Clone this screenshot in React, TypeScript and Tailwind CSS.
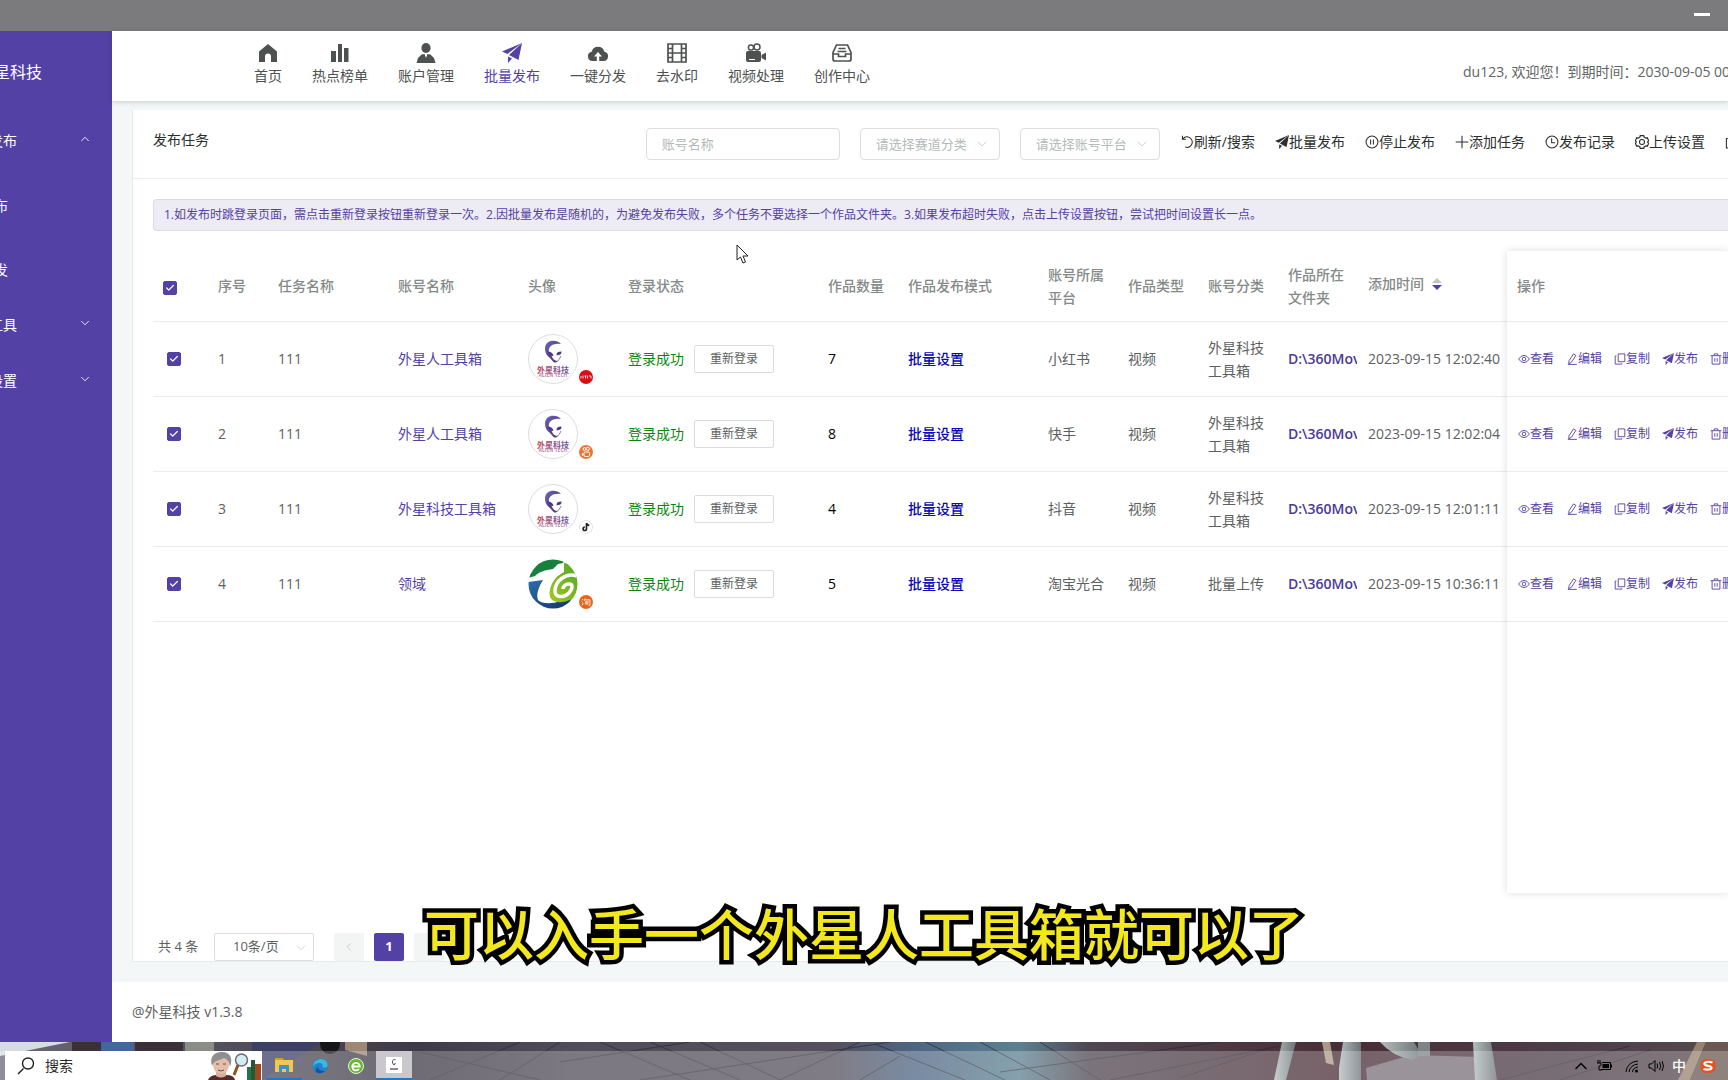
import { useState } from 'react';
import type { ReactNode } from 'react';
import { Check, ChevronDown, ChevronLeft, ChevronUp } from 'lucide-react';

// ---------- icons (20 x 20 grid) ----------

function Glyph({ className, children }: { className?: string; children: ReactNode }) {
    return (
        <svg viewBox="0 0 20 20" className={className} fill="currentColor" aria-hidden="true">
            {children}
        </svg>
    );
}

const line = { fill: 'none', stroke: 'currentColor', strokeWidth: 1.5 };

const icons: Record<string, ReactNode> = {
    home: <path d="M10 1 19 8.500V19h-6v-5.500a3 3 0 0 0-6 0V19H1V8.500z" />,
    stats: <path d="M1 8h5v11H1zM8 1h4v18H8zM14 5h4.500v14H14z" />,
    person: (
        <>
            <ellipse cx="10" cy="5" rx="4.600" ry="5" />
            <path d="M5.500 11.500 8.500 11l1.500 4 1.500-4 3 .5L18 15l1.500 5H.500L2 15z" />
        </>
    ),
    plane: (
        <>
            <path d="M20 0 0 8.500 5.500 11z" />
            <path d="M20 0 7 12l9.500 5z" />
            <path d="M6 13.500V20l4-4.500z" />
        </>
    ),
    cloud: (
        <>
            <path d="M4.800 18A4.700 4.700 0 0 1 3.700 8.700 6.500 6.500 0 0 1 16.300 8.700 4.700 4.700 0 0 1 15.200 18z" />
            <path d="M10 9 6 13.500h2.800V18h2.400v-4.500H14z" fill="#fff" />
        </>
    ),
    film: <path {...line} strokeWidth={1.7} d="M1 1h18v18H1zM5.500 1v18M14.500 1v18M5.500 10h9M1 5.500h4.500M1 10h4.500M1 14.500h4.500M14.500 5.500H19M14.500 10H19M14.500 14.500H19" />,
    camera: (
        <>
            <circle cx="5" cy="4.500" r="2.600" {...line} />
            <circle cx="11" cy="4" r="3" {...line} />
            <rect x="0" y="8" width="15" height="11" rx="2" />
            <path d="M15.500 12 20 9.500v8L15.500 15z" />
            <path d="M3 16.500h6" stroke="#fff" strokeWidth="1" />
        </>
    ),
    inbox: <path {...line} strokeWidth={1.7} d="M4.500 2h11L19 9.500V16a2 2 0 0 1-2 2H3a2 2 0 0 1-2-2V9.500zM1 11h5.500v2.500h7V11H19M6.500 5.500h7M5.500 8.500h9" />,
    refresh: <path {...line} d="M4 5.500A7.500 7.500 0 1 1 7.500 17.300M3.500 1v5h5" />,
    pause: (
        <>
            <circle cx="10" cy="10" r="8.500" {...line} />
            <path {...line} d="M8 6.500v7M12 6.500v7" />
        </>
    ),
    plus: <path {...line} d="M10 1v18M1 10h18" />,
    clock: (
        <>
            <circle cx="10" cy="10" r="8.500" {...line} />
            <path {...line} d="M9.500 4.500V11h5" />
        </>
    ),
    gear: (
        <>
            <path {...line} strokeWidth={1.7} d="m7 3 .5-2h5l.5 2 2.500 1.500 2-.5 2 4-1.500 2 1.500 2-2 4-2-.5L13 17l-.5 2h-5L7 17l-2.500-1.500-2 .5-2-4L2 10 .5 8l2-4 2 .5z" />
            <circle cx="10" cy="10" r="3.600" {...line} />
        </>
    ),
    eye: (
        <>
            <path {...line} d="M1 10q4-6 9-6t9 6q-4 6-9 6t-9-6z" />
            <circle cx="10" cy="10" r="3" {...line} />
        </>
    ),
    edit: <path {...line} d="M12.500 1.500 16.500 4 9 15.500l-4.500 2.500.5-5zM3 19h15" />,
    copy: <path {...line} d="M7 1.500h11v13H7zM4 5H2v13.500h11V17" />,
    trash: <path {...line} d="M1 4.500h18M7 4V1.500h6V4M3.500 4.500v14h13v-14M8 8.500v6M12 8.500v6" />,
};

// ---------- data ----------

const navItems = [
    { icon: 'home', label: '首页' },
    { icon: 'stats', label: '热点榜单' },
    { icon: 'person', label: '账户管理' },
    { icon: 'plane', label: '批量发布' },
    { icon: 'cloud', label: '一键分发' },
    { icon: 'film', label: '去水印' },
    { icon: 'camera', label: '视频处理' },
    { icon: 'inbox', label: '创作中心' },
];

const toolbar = [
    { icon: 'refresh', label: '刷新/搜索' },
    { icon: 'plane', label: '批量发布' },
    { icon: 'pause', label: '停止发布' },
    { icon: 'plus', label: '添加任务' },
    { icon: 'clock', label: '发布记录' },
    { icon: 'gear', label: '上传设置' },
];

const rowActions = [
    { icon: 'eye', label: '查看' },
    { icon: 'edit', label: '编辑' },
    { icon: 'copy', label: '复制' },
    { icon: 'plane', label: '发布' },
    { icon: 'trash', label: '删除' },
];

const tasks = [
    { id: 1, account: '外星人工具箱', count: 7, platform: '小红书', badge: 'red', category: '外星科技工具箱', time: '2023-09-15 12:02:40' },
    { id: 2, account: '外星人工具箱', count: 8, platform: '快手', badge: 'kuaishou', category: '外星科技工具箱', time: '2023-09-15 12:02:04' },
    { id: 3, account: '外星科技工具箱', count: 4, platform: '抖音', badge: 'douyin', category: '外星科技工具箱', time: '2023-09-15 12:01:11' },
    { id: 4, account: '领域', count: 5, platform: '淘宝光合', badge: 'taobao', category: '批量上传', time: '2023-09-15 10:36:11' },
];

// ---------- small parts ----------

function Checkbox({ label, checked, onChange }: { label: string; checked: boolean; onChange: () => void }) {
    return (
        <label className="relative block w-3.5 h-3.5">
            <input
                type="checkbox"
                aria-label={label}
                checked={checked}
                onChange={onChange}
                className="block w-3.5 h-3.5 appearance-none rounded-xs border border-gray-300 checked:bg-[#5441a6] checked:border-[#5441a6]"
            />
            {checked && <Check className="absolute inset-0.5 w-2.5 h-2.5 text-white pointer-events-none" strokeWidth={3} />}
        </label>
    );
}

function FilterSelect({ placeholder }: { placeholder: string }) {
    return (
        <div className="relative w-[140px] mt-1">
            <select
                aria-label={placeholder}
                className="w-full h-8 pl-[15px] pr-7 appearance-none rounded border border-[#dcdfe2] bg-white text-[13px] text-[#b4bab9]"
            >
                <option>{placeholder}</option>
            </select>
            <ChevronDown className="absolute right-2.5 top-2 w-4 h-4 text-[#c0c4cc] pointer-events-none" strokeWidth={1.2} />
        </div>
    );
}

function AlienAvatar() {
    return (
        <svg viewBox="0 0 50 50" className="w-[50px] h-[50px]" role="img" aria-label="外星科技">
            <defs>
                <linearGradient id="alien" x1="0" y1="0" x2="1" y2="1">
                    <stop offset="0" stopColor="#6a6fb8" />
                    <stop offset="0.5" stopColor="#5b3d92" />
                    <stop offset="1" stopColor="#4c4358" />
                </linearGradient>
                <linearGradient id="brand" x1="0" x2="1">
                    <stop offset="0" stopColor="#c5485c" />
                    <stop offset="1" stopColor="#6557a6" />
                </linearGradient>
            </defs>
            <circle cx="25" cy="25" r="24.500" fill="#fff" stroke="#dcdce4" />
            <path
                d="M33 10C28 5 17 5.500 17 15c0 4 2 7 5 9l3.500 4c1.500 1 3 .5 4-1-3 0-5-2.500-6-5.500C19 19 19 8.500 33 10z"
                fill="url(#alien)"
            />
            <path d="M19.500 17.500c3.500 0 5.500 1.500 6 4.500-3.500 0-5.500-1.500-6-4.500zM33.500 17.500c-3.500 0-5 1-5 3.800 3.500 0 5-1 5-3.800z" fill="#4c3a86" />
            <path d="M33 22q-1.500 4-4.500 6" fill="none" stroke="#6a5c86" strokeWidth="0.800" />
            <text x="25" y="38.500" textAnchor="middle" fontSize="8" fontWeight="700" fill="url(#brand)">外星科技</text>
            <text x="25" y="43" textAnchor="middle" fontSize="5" fontWeight="700" fill="#b58aa8">ALIEN TECH</text>
        </svg>
    );
}

function FieldAvatar() {
    return (
        <svg viewBox="0 0 50 50" className="w-[50px] h-[50px]" role="img" aria-label="领域">
            <defs>
                <linearGradient id="leaf" x1="0" y1="1" x2="1" y2="0">
                    <stop offset="0" stopColor="#a5c81c" />
                    <stop offset="1" stopColor="#4ea62c" />
                </linearGradient>
                <linearGradient id="sea" x1="0" y1="0" x2="1" y2="1">
                    <stop offset="0" stopColor="#2c6fae" />
                    <stop offset="1" stopColor="#12305f" />
                </linearGradient>
                <clipPath id="disc"><circle cx="25" cy="25" r="24.500" /></clipPath>
            </defs>
            <g clipPath="url(#disc)">
                <rect width="50" height="50" fill="#fff" />
                <path d="M0 0h38l-3 4-5 1-5 5c-8 1-14 3-18 7L0 19z" fill="#17803c" />
                <path d="M0 23l15-2c-5 8-7 15-5 20 6 6 25 4 38-8L36 52H0z" fill="url(#sea)" />
                <path d="M36 4l14 2v30c-6 5-14 8-20 7-8 0-10-6-8-13 2-8 7-13 13-17z" fill="url(#leaf)" />
                <path d="M49 17C38 13 27 22 27 32c0 7 9 7 14 2 4-5 4-9 0-9s-6 3-6 5" fill="none" stroke="#fff" strokeWidth="3.500" />
                <path d="M36 5l-4 1-6 6c-7 0-14 2-19 7l10-1c-4 7-5 14-4 19 2 5 9 7 15 6-6-2-8-7-6-14 2-7 5-11 9-13l5-3z" fill="#fff" />
            </g>
        </svg>
    );
}

function PlatformBadge({ kind }: { kind: string }) {
    return (
        <svg viewBox="0 0 14 14" className="w-3.5 h-3.5" aria-hidden="true">
            {kind === 'red' && (
                <>
                    <circle cx="7" cy="7" r="7" fill="#dd0d14" />
                    <path d="M2 6v2.500M4 5.500v3M5.500 6h2M6.500 6v2.500M8.500 5.500v3M10 6h2v2.500" stroke="#fff" strokeWidth="0.800" fill="none" />
                </>
            )}
            {kind === 'kuaishou' && (
                <>
                    <circle cx="7" cy="7" r="7" fill="#ee7431" />
                    <circle cx="5.500" cy="4" r="1.400" fill="none" stroke="#fff" />
                    <circle cx="8.800" cy="3.800" r="1.600" fill="none" stroke="#fff" />
                    <rect x="5" y="7" width="5.500" height="4.500" rx="1.200" fill="none" stroke="#fff" />
                    <path d="M3 7.500v3.500l2-1.500z" fill="#fff" />
                </>
            )}
            {kind === 'douyin' && (
                <>
                    <circle cx="7" cy="7" r="6.500" fill="#fff" stroke="#e3dfe3" />
                    <path d="M7.500 3v5.800a1.700 1.700 0 1 1-1.700-1.700M7.500 3c.3 1.500 1.200 2.300 2.800 2.400" fill="none" stroke="#222" strokeWidth="1.700" />
                </>
            )}
            {kind === 'taobao' && (
                <>
                    <circle cx="7" cy="7" r="7" fill="#e8641b" />
                    <path d="M3 4l1 1M2.500 6.500l1 .5M3 10.500 4.200 8M6 3.500 5.200 6M5.800 4.800H11v5.500H9.500M6 7h4M8 5.500V9M6.300 7.500V9h3.200" fill="none" stroke="#fff" strokeWidth="0.800" />
                </>
            )}
        </svg>
    );
}

// ---------- page sections ----------

function Sidebar() {
    return (
        <aside className="w-28 shrink-0 bg-[#5441a6] text-sm text-white">
            <div className="flex justify-end w-[42px] h-[82px] items-center overflow-hidden whitespace-nowrap text-base">星科技</div>
            <nav>
                <SideItem label="发布" arrow="up" />
                <a href="#batch" className="flex justify-end items-center w-2 h-[74px] overflow-hidden whitespace-nowrap">布</a>
                <a href="#single" className="flex justify-end items-center w-2 h-[54px] overflow-hidden whitespace-nowrap">发</a>
                <SideItem label="工具" arrow="down" />
                <SideItem label="设置" arrow="down" />
            </nav>
        </aside>
    );
}

function SideItem({ label, arrow }: { label: string; arrow: 'up' | 'down' }) {
    const Arrow = arrow === 'up' ? ChevronUp : ChevronDown;
    return (
        <button className="flex items-center justify-between w-full h-14 pr-5">
            <span className="flex justify-end w-[17px] overflow-hidden whitespace-nowrap">{label}</span>
            <Arrow className="w-3.5 h-3.5 mb-1" strokeWidth={1.5} />
        </button>
    );
}

function Header() {
    return (
        <header className="relative flex h-[70px] shrink-0 bg-white text-sm text-[#4d5150] shadow-[0_1px_5px_rgba(0,21,41,0.2)]">
            <nav className="flex flex-1 pl-[127px]">
                {navItems.map(item => (
                    <a
                        key={item.label}
                        href="#nav"
                        className={`flex flex-col items-center gap-1 px-[15px] pt-3 leading-[18px] whitespace-nowrap ${item.label === '批量发布' ? 'text-[#5441a6]' : ''}`}
                    >
                        <Glyph className="w-5 h-5">{icons[item.icon]}</Glyph>
                        {item.label}
                    </a>
                ))}
            </nav>
            <div className="w-[265px] pt-3 flex items-center overflow-hidden whitespace-nowrap text-[#606463]">
                du123, 欢迎您！到期时间：2030-09-05 00
            </div>
        </header>
    );
}

function CardHead() {
    return (
        <div className="flex items-center h-[69px] shrink-0 pl-5 pb-2 border-b border-[#eceeee] text-sm text-[#2b2f2e] whitespace-nowrap">
            <h2 className="flex-1">发布任务</h2>
            <div className="flex items-center gap-5 pt-1">
                <input
                    type="text"
                    aria-label="账号名称"
                    placeholder="账号名称"
                    className="w-[194px] h-8 mt-1 px-[15px] rounded border border-[#dcdfe2] text-[13px] placeholder:text-[#b4bab9]"
                />
                <FilterSelect placeholder="请选择赛道分类" />
                <FilterSelect placeholder="请选择账号平台" />
                {toolbar.map(item => (
                    <button key={item.label} className="flex items-center">
                        <Glyph className="w-3.5 h-3.5">{icons[item.icon]}</Glyph>
                        {item.label}
                    </button>
                ))}
                <button aria-label="删除" className="w-[3px] h-3.5 overflow-hidden">
                    <Glyph className="w-3.5 h-3.5">{icons.copy}</Glyph>
                </button>
            </div>
        </div>
    );
}

function TaskTable() {
    const [checked, setChecked] = useState<number[]>(tasks.map(t => t.id));
    const all = checked.length === tasks.length;

    const toggle = (id: number) => {
        setChecked(checked.includes(id) ? checked.filter(c => c !== id) : [...checked, id]);
    };

    return (
        <div className="flex flex-1 mt-5 text-sm leading-[23px] text-[#5c605f]">
            <div className="flex-1 min-w-0 overflow-hidden">
                <table className="w-full table-fixed text-left">
                    <colgroup>
                        <col className="w-[55px]" />
                        <col className="w-[60px]" />
                        <col className="w-[120px]" />
                        <col className="w-[130px]" />
                        <col className="w-[100px]" />
                        <col />
                        <col className="w-20" />
                        <col className="w-[140px]" />
                        <col className="w-20" />
                        <col className="w-20" />
                        <col className="w-20" />
                        <col className="w-20" />
                        <col className="w-[149px]" />
                    </colgroup>
                    <thead>
                        <tr className="h-[70px] border-b border-[#e9ecec] text-[#858a89] [&>th]:pl-2.5 [&>th]:font-medium [&>th]:whitespace-nowrap">
                            <th className="pt-1"><Checkbox label="全选" checked={all} onChange={() => setChecked(all ? [] : tasks.map(t => t.id))} /></th>
                            <th>序号</th>
                            <th>任务名称</th>
                            <th>账号名称</th>
                            <th>头像</th>
                            <th>登录状态</th>
                            <th>作品数量</th>
                            <th>作品发布模式</th>
                            <th>账号所属<br />平台</th>
                            <th>作品类型</th>
                            <th>账号分类</th>
                            <th>作品所在<br />文件夹</th>
                            <th className="pb-1">
                                <button className="flex items-center gap-2">
                                    添加时间
                                    <svg viewBox="0 0 10 12" className="w-2.5 h-3" aria-hidden="true">
                                        <path d="M5 0l5 5H0z" fill="#c0c4cc" />
                                        <path d="M5 12 0 7h10z" fill="#5441a6" />
                                    </svg>
                                </button>
                            </th>
                        </tr>
                    </thead>
                    <tbody>
                        {tasks.map(task => (
                            <tr key={task.id} className="h-[75px] border-b border-[#e9ecec] [&>td]:pl-2.5">
                                <td>
                                    <div className="pl-1">
                                        <Checkbox label={`选择任务 ${task.id}`} checked={checked.includes(task.id)} onChange={() => toggle(task.id)} />
                                    </div>
                                </td>
                                <td>{task.id}</td>
                                <td>111</td>
                                <td className="text-[#5441a6]">{task.account}</td>
                                <td>
                                    <div className="flex items-end gap-px">
                                        {task.badge === 'taobao' ? <FieldAvatar /> : <AlienAvatar />}
                                        <PlatformBadge kind={task.badge} />
                                    </div>
                                </td>
                                <td>
                                    <div className="flex items-center gap-2.5 whitespace-nowrap">
                                        <span className="text-[#0b860b]">登录成功</span>
                                        <button className="w-20 h-7 rounded-xs border border-[#d9dddd] text-xs">重新登录</button>
                                    </div>
                                </td>
                                <td className="text-black">{task.count}</td>
                                <td><a href="#mode" className="font-medium text-[#0a0ab0]">批量设置</a></td>
                                <td>{task.platform}</td>
                                <td>视频</td>
                                <td className="pr-2">{task.category}</td>
                                <td>
                                    <div className="w-[69px] overflow-hidden whitespace-nowrap font-semibold text-[#4b3a96]">D:\360Mov</div>
                                </td>
                                <td className="whitespace-nowrap">{task.time}</td>
                            </tr>
                        ))}
                    </tbody>
                </table>
            </div>

            {/* pinned column */}
            <div className="w-[221px] shrink-0 overflow-hidden bg-white shadow-[0_0_8px_rgba(0,0,0,0.14)]">
                <table className="w-full table-fixed text-left">
                    <thead>
                        <tr className="h-[70px] border-b border-[#e9ecec] text-[#858a89]">
                            <th className="pl-2.5 font-medium">操作</th>
                        </tr>
                    </thead>
                    <tbody>
                        {tasks.map(task => (
                            <tr key={task.id} className="h-[75px] border-b border-[#e9ecec]">
                                <td className="pl-[11px]">
                                    <div className="flex gap-3 whitespace-nowrap text-xs text-[#5441a6]">
                                        {rowActions.map(action => (
                                            <button key={action.label} className="flex shrink-0 items-center">
                                                <Glyph className="w-3 h-3">{icons[action.icon]}</Glyph>
                                                {action.label}
                                            </button>
                                        ))}
                                    </div>
                                </td>
                            </tr>
                        ))}
                    </tbody>
                </table>
            </div>
        </div>
    );
}

function Pagination() {
    return (
        <div className="flex items-center h-7 mt-10 pl-[5px] text-[13px] text-[#5c605f]">
            <span className="w-14">共 4 条</span>
            <div className="relative w-[100px] mr-5">
                <select aria-label="每页条数" className="w-full h-7 pl-[18px] appearance-none rounded-xs border border-[#dcdfe2] bg-white">
                    <option>10条/页</option>
                </select>
                <ChevronDown className="absolute right-1.5 top-2 w-3.5 h-3.5 text-[#c0c4cc] pointer-events-none" strokeWidth={1.2} />
            </div>
            <div className="flex gap-2.5">
                <button disabled aria-label="上一页" className="flex items-center justify-center w-[30px] h-7 rounded-xs bg-[#f3f5f5] text-[#c0c4cc]">
                    <ChevronLeft className="w-3.5 h-3.5" strokeWidth={1.5} />
                </button>
                <button className="w-[30px] h-7 rounded-xs bg-[#5441a6] font-bold text-white">1</button>
                <button disabled aria-label="下一页" className="w-[30px] h-7 rounded-xs bg-[#f3f5f5]" />
            </div>
        </div>
    );
}

function Wallpaper() {
    return (
        <svg viewBox="0 0 1728 38" preserveAspectRatio="none" className="absolute inset-0 w-full h-full" aria-hidden="true">
            <defs>
                <linearGradient id="floor" x1="0" x2="1">
                    <stop offset="0" stopColor="#6b6775" />
                    <stop offset="0.240" stopColor="#3f3a47" />
                    <stop offset="0.330" stopColor="#504c59" />
                    <stop offset="0.480" stopColor="#55505b" />
                    <stop offset="0.530" stopColor="#4d6584" />
                    <stop offset="0.590" stopColor="#5c8190" />
                    <stop offset="0.630" stopColor="#4f4650" />
                    <stop offset="0.780" stopColor="#4a2d36" />
                    <stop offset="0.900" stopColor="#4b3d47" />
                    <stop offset="1" stopColor="#574a50" />
                </linearGradient>
                <linearGradient id="leg" x1="0" x2="1">
                    <stop offset="0" stopColor="#b4bdbc" />
                    <stop offset="1" stopColor="#6c7278" />
                </linearGradient>
            </defs>
            <rect width="1728" height="38" fill="url(#floor)" />
            <path d="M0 0h70L0 14z" fill="#d5dce2" />
            <path d="M72 0h36v10H72zM135 0h48v10h-48z" fill="#39303a" />
            <path d="M101 0h32v9h-32z" fill="#4266a0" />
            <path d="M185 0h29v9h-29z" fill="#8a8d86" />
            <path d="M252 0h70l-60 38h-10z" fill="#3d3f66" />
            <circle cx="330" cy="2" r="10" fill="#15151a" />
            <path d="M345 0h22v14l-22-6z" fill="#9d8776" />
            <g stroke="#2d2a35" strokeWidth="1" opacity="0.7">
                <path d="M430 38 520 0M560 0 500 38M600 0l90 38M650 0l90 38M700 0l80 38M560 20l130-20M640 38 890 0M860 38l40-24M875 2l90 36M925 0l80 38M980 0l70 38M1040 0l60 38M1000 30l220-30M1110 38l170-34M1180 36l90-30M1500 38l130-34M1560 38l90-30M420 10l120 28M780 38 860 0" />
            </g>
            <path d="M1282 0h14l-10 38h-12z" fill="url(#leg)" />
            <path d="M1322 0h8l4 23-8-2z" fill="#a89a86" />
            <path d="M1343 0h18v38h-22v-12z" fill="url(#leg)" />
            <path d="M1366 26l45-13 70 2 12 23h-126z" fill="#787078" />
            <path d="M1380 0h34l8 14-10 4q-20-4-32-18z" fill="url(#leg)" />
            <path d="M1418 0h12v14h-12z" fill="#7d8387" />
            <path d="M1473 0h18l6 38h-22z" fill="url(#leg)" />
            <path d="M1697 0h9l-16 38h-12z" fill="#97826f" />
            <path d="M1706 0h22v38h-38z" fill="#6a5852" />
        </svg>
    );
}

function Taskbar() {
    return (
        <footer className="relative flex items-end h-[38px] shrink-0 overflow-hidden">
            <Wallpaper />
            <div className="relative flex items-center w-full h-[29px] pl-[5px] bg-white/25">
                <label className="relative flex items-center w-[257px] h-full pl-3 bg-white">
                    <svg viewBox="0 0 18 18" className="w-[18px] h-[18px]" aria-hidden="true">
                        <path d="M6.500 11.500 1 17" stroke="#222" strokeWidth="1.400" />
                        <circle cx="11" cy="6.500" r="5.500" fill="none" stroke="#222" strokeWidth="1.400" />
                    </svg>
                    <input type="text" aria-label="搜索" placeholder="搜索" className="w-36 ml-2.5 text-sm placeholder:text-[#2a2a2a]" />
                    <svg viewBox="0 0 54 28" className="absolute right-0 bottom-0 w-[54px] h-7" aria-hidden="true">
                        <path d="M0 28q2-5 9-5h9q8 0 9 5z" fill="#592a2a" />
                        <path d="M8 18h10v6q-5 3-10 0z" fill="#d9ad97" />
                        <ellipse cx="13" cy="13" rx="8" ry="9" fill="#e5beab" />
                        <path d="M4 14C1 3 8 0 14 0c9 0 11 7 8 15-1-6-3-8-6-9-5 3-10 2-12 8z" fill="#8f8f92" />
                        <path d="M8 12h3M15 12h3M10 18q3 2 6 0" stroke="#6b4a44" strokeWidth="1" fill="none" />
                        <path d="M30 13l-4 10" stroke="#8a5423" strokeWidth="3" />
                        <circle cx="33.500" cy="8" r="6" fill="#d5ecf5" stroke="#6a6f72" strokeWidth="1.500" />
                        <path d="M39 15h4v13h-4z" fill="#26734a" />
                        <path d="M43 8h4v20h-4z" fill="#1d5b3a" />
                        <path d="M47 12h6v16h-6z" fill="#a2481f" />
                    </svg>
                </label>
                <button aria-label="文件资源管理器" className="flex items-center justify-center w-9 h-full ml-1 border-b-2 border-[#2a76bd]">
                    <svg viewBox="0 0 18 16" className="w-[18px] h-4">
                        <path d="M0 1h7l2 2h9v12H0z" fill="#f3c84f" />
                        <path d="M0 1h7l2 2H0z" fill="#d99a25" />
                        <path d="M4 8h10v7h-3v-3H7v3H4z" fill="#3f93c9" />
                    </svg>
                </button>
                <button aria-label="Edge" className="flex items-center justify-center w-9 h-full">
                    <svg viewBox="0 0 16 16" className="w-4 h-4">
                        <circle cx="8" cy="8" r="7.500" fill="#1f83cf" />
                        <path d="M1 9C1 3 6 1 9 1c4 0 7 3 6.500 7-1 2-4 2-5 1 1-3-1-4-3-4C4 5 2 7 1 9z" fill="#3cb8e0" />
                        <path d="M6 9q0 4 7 4-5 4-9 1-1-4 2-5z" fill="#14569e" />
                    </svg>
                </button>
                <button aria-label="浏览器" className="flex items-center justify-center w-9 h-full">
                    <svg viewBox="0 0 16 16" className="w-4 h-4">
                        <circle cx="8" cy="8" r="7.500" fill="#66b82e" stroke="#e9f5dc" />
                        <path d="M4.500 8.500h7.300A3.800 3.800 0 1 0 11 11" fill="none" stroke="#fff" strokeWidth="1.800" />
                    </svg>
                </button>
                <button aria-label="外星科技" className="flex items-center justify-center w-9 h-full ml-0.5 bg-[#c9c8cd] border-b-2 border-[#2a76bd]">
                    <svg viewBox="0 0 16 16" className="w-4 h-4">
                        <path d="M0 0h16v16H0z" fill="#fff" />
                        <path d="M9.500 2.500C6 2 5.500 5.500 8 8L9.500 6" fill="none" stroke="#51425f" />
                        <path d="M4 12h8" stroke="#7d5c74" strokeWidth="1.500" />
                    </svg>
                </button>

                <div className="flex items-center gap-2 ml-auto pr-3 text-black">
                    <svg viewBox="0 0 14 14" className="w-3.5 h-3.5" aria-label="显示隐藏的图标">
                        <path d="M1.500 10 7 4.500l5.500 5.500" fill="none" stroke="currentColor" strokeWidth="1.400" />
                    </svg>
                    <svg viewBox="0 0 16 14" className="w-4 h-3.5" aria-label="电池">
                        <path d="M2 1v3M4 1v3M1 4h4v2q0 1-2 1v4h3M6 3.500h8.500v7H5M15.500 5.500v3" fill="none" stroke="currentColor" />
                        <path d="M6.500 5H13v4H6.500z" fill="currentColor" />
                    </svg>
                    <svg viewBox="0 0 16 14" className="w-4 h-3.5 ml-1" aria-label="网络">
                        <path d="M2 13Q3 3 14 2M5 13q1-7 9-8M8.500 13q0-4 5.500-5" fill="none" stroke="currentColor" />
                        <circle cx="12.500" cy="12" r="1.500" fill="currentColor" />
                    </svg>
                    <svg viewBox="0 0 16 14" className="w-4 h-3.5" aria-label="音量">
                        <path d="M1 5h2.500L7 1.500v11L3.500 9H1zM9 4.500q1.500 2.500 0 5M11.500 3q2.500 4 0 8M14 2q3 5 0 10" fill="none" stroke="currentColor" />
                    </svg>
                    <span className="text-sm leading-5 font-medium text-white">中</span>
                    <svg viewBox="0 0 16 16" className="w-4 h-4 ml-1.5" aria-label="输入法">
                        <rect x="0.500" y="1" width="15" height="14" rx="6" fill="#e8501e" />
                        <path d="M12.500 4.500C8 3 4 4 4.500 6.300c.5 2 7 1.200 7 3.400 0 2-4 2.300-8 1.300" fill="none" stroke="#fff" strokeWidth="2.200" />
                    </svg>
                </div>
            </div>
        </footer>
    );
}

export default function App() {
    return (
        <div className="relative flex flex-col h-screen overflow-hidden bg-white font-['Open_Sans','Noto_Sans_CJK_SC',sans-serif]">
            <div className="flex items-start justify-end h-[31px] shrink-0 pr-[18px] bg-[#7b7b7d]">
                <button aria-label="最小化" className="w-4 h-4 border-b-3 border-white" />
            </div>

            <div className="flex flex-1 min-h-0">
                <Sidebar />
                <div className="flex flex-col flex-1 min-w-0">
                    <Header />
                    <main className="flex flex-col flex-1 min-h-0 pt-[9px] pl-5 pb-5 bg-[#f4f7f7]">
                        <section className="flex flex-col flex-1 min-h-0 border-l border-b border-[#e8ebeb] bg-white">
                            <CardHead />
                            <div className="flex flex-col flex-1 min-h-0 pl-5 pt-5">
                                <p className="h-8 pl-2.5 rounded-l border border-r-0 border-[#dcdae6] bg-[#edebf3] text-xs leading-[30px] text-[#5441a6] whitespace-nowrap">
                                    1.如发布时跳登录页面，需点击重新登录按钮重新登录一次。2.因批量发布是随机的，为避免发布失败，多个任务不要选择一个作品文件夹。3.如果发布超时失败，点击上传设置按钮，尝试把时间设置长一点。
                                </p>
                                <TaskTable />
                                <Pagination />
                            </div>
                        </section>
                    </main>
                    <div className="flex items-center h-[60px] shrink-0 pl-5 text-sm text-[#5c605f]">@外星科技 v1.3.8</div>
                </div>
            </div>

            <Taskbar />

            {/* mouse pointer */}
            <svg viewBox="0 0 13 20" className="absolute left-[736px] top-[244px] w-[13px] h-5" aria-hidden="true">
                <path d="M1 1v15l3.500-3 2.500 6 2.500-1-2.500-6H12z" fill="#fff" stroke="#222" />
            </svg>

            {/* caption */}
            <p className="absolute inset-x-0 bottom-[118px] text-center text-[55px] leading-[56px] font-medium text-[#f3e81d] whitespace-nowrap [-webkit-text-stroke:9px_#000] [paint-order:stroke_fill] [stroke-linejoin:round]">
                可以入手一个外星人工具箱就可以了
            </p>
        </div>
    );
}
